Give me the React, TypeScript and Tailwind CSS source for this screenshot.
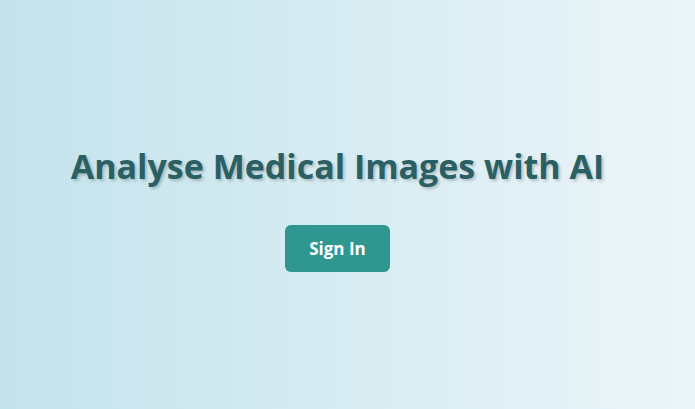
export default function App() {
  return (
    <main className="min-h-[409px] w-full bg-gradient-to-r from-[#c3e3ec] to-[#ebf5f9] flex items-center justify-center pr-[20px] font-['Open_Sans',sans-serif]">
      <div className="flex flex-col items-center gap-[33px] pt-[4px]">
        <h1 className="text-[34px] font-bold text-[#2a6064] [text-shadow:2px_2px_3px_rgba(0,0,0,0.2)]">
          Analyse Medical Images with AI
        </h1>
        <button className="w-[105px] h-[47px] rounded-[6px] bg-[#2f9690] text-white text-[17px] font-bold">
          Sign In
        </button>
      </div>
    </main>
  );
}
